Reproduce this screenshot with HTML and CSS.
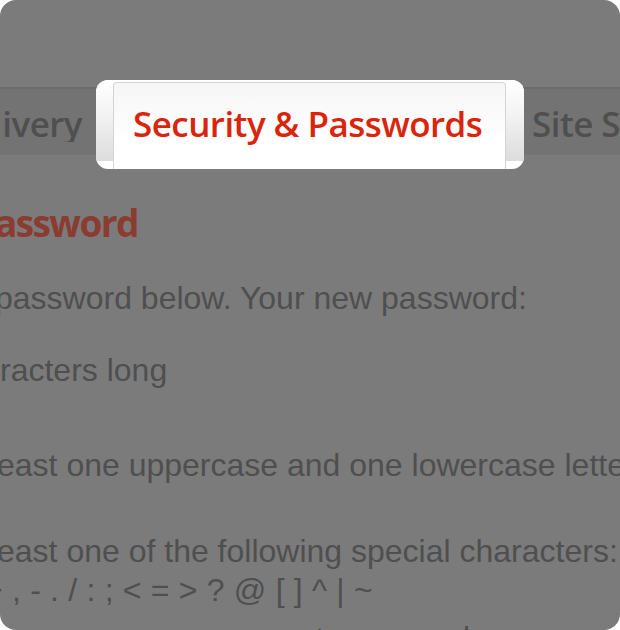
FILE: index.html
```html
<!DOCTYPE html>
<html>
<head>
<meta charset="utf-8">
<link rel="stylesheet" href="styles.css">
</head>
<body>
<div class="card">
  <div class="tabbar">
    <div class="tab tab-prev">ivery</div>
    <div class="spotlight">
      <div class="edge edge-left"></div>
      <div class="tab-active">Security &amp; Passwords</div>
      <div class="edge edge-right"></div>
    </div>
    <div class="tab tab-next">Site S</div>
  </div>
  <div class="content">
    <h1 class="heading">assword</h1>
    <p class="line intro">password below. Your new password:</p>
    <p class="line item item-1">racters long</p>
    <p class="line item item-2">east one uppercase and one lowercase letter</p>
    <p class="line item item-3">east one of the following special characters:<br><span class="chars">+ , - . / : ; &lt; = &gt; ? @ [ ] ^ | ~</span></p>
    <p class="line item item-4">e same as your current password or your username</p>
  </div>
</div>
</body>
</html>
```
FILE: styles.css
```css
html, body {
  margin: 0;
  padding: 0;
  background: #ffffff;
}
.card {
  width: 620px;
  height: 630px;
  background: #7b7b7b;
  border-radius: 16px;
  overflow: hidden;
  padding-top: 87px;
  box-sizing: border-box;
}
.tabbar {
  display: flex;
  align-items: flex-start;
  height: 68px;
  box-sizing: border-box;
  background: #737373;
  border-top: 2px solid #6c6c6c;
  border-bottom: 1px solid #767676;
  font-family: "Open Sans", "DejaVu Sans", sans-serif;
  font-weight: 600;
  font-size: 35px;
  letter-spacing: -0.55px;
  line-height: 36px;
  white-space: nowrap;
}
.tab {
  color: #4f4f4f;
  padding-top: 17px;
}
.tab-prev {
  width: 96px;
  flex: none;
  display: flex;
  justify-content: flex-end;
  padding-right: 14px;
  box-sizing: border-box;
  overflow: hidden;
}
.tab-next {
  padding-left: 8px;
}
.spotlight {
  flex: none;
  width: 428px;
  height: 89px;
  margin-top: -9px;
  background: #ffffff;
  border-radius: 12px;
  display: flex;
  overflow: hidden;
}
.edge {
  width: 17px;
  height: 81px;
  flex: none;
  background: linear-gradient(#ffffff, #f4f4f4 40%, #dcdcdc);
}
.edge-right {
  width: 18px;
}
.tab-active {
  flex: 1;
  margin-top: 2px;
  border: 1px solid #d4d4d4;
  border-bottom: none;
  border-radius: 4px 4px 0 0;
  background: linear-gradient(#f6f6f6, #ffffff 70%);
  color: #d9250c;
  padding-top: 23px;
  padding-left: 19px;
}
.content {
  font-family: "Liberation Sans", Arial, sans-serif;
  color: #4f4f4f;
}
.heading {
  margin: 46px 0 0;
  font-family: "Open Sans", "DejaVu Sans", sans-serif;
  font-weight: 700;
  font-size: 37px;
  line-height: 44px;
  letter-spacing: -1.6px;
  color: #8a3c31;
  text-indent: -5px;
  white-space: nowrap;
}
.line {
  margin: 0;
  font-size: 32px;
  line-height: 36px;
  white-space: nowrap;
}
.intro {
  margin-top: 35px;
  text-indent: -5px;
}
.item-1 {
  margin-top: 36px;
}
.item-2 {
  margin-top: 59px;
  text-indent: -3px;
}
.item-3 {
  margin-top: 50px;
  text-indent: -3px;
}
.chars {
  display: inline-block;
  margin-top: 3px;
  margin-left: -13px;
  word-spacing: 0.4px;
}
.item-4 {
  margin-top: 12px;
  text-indent: -3px;
}
```
